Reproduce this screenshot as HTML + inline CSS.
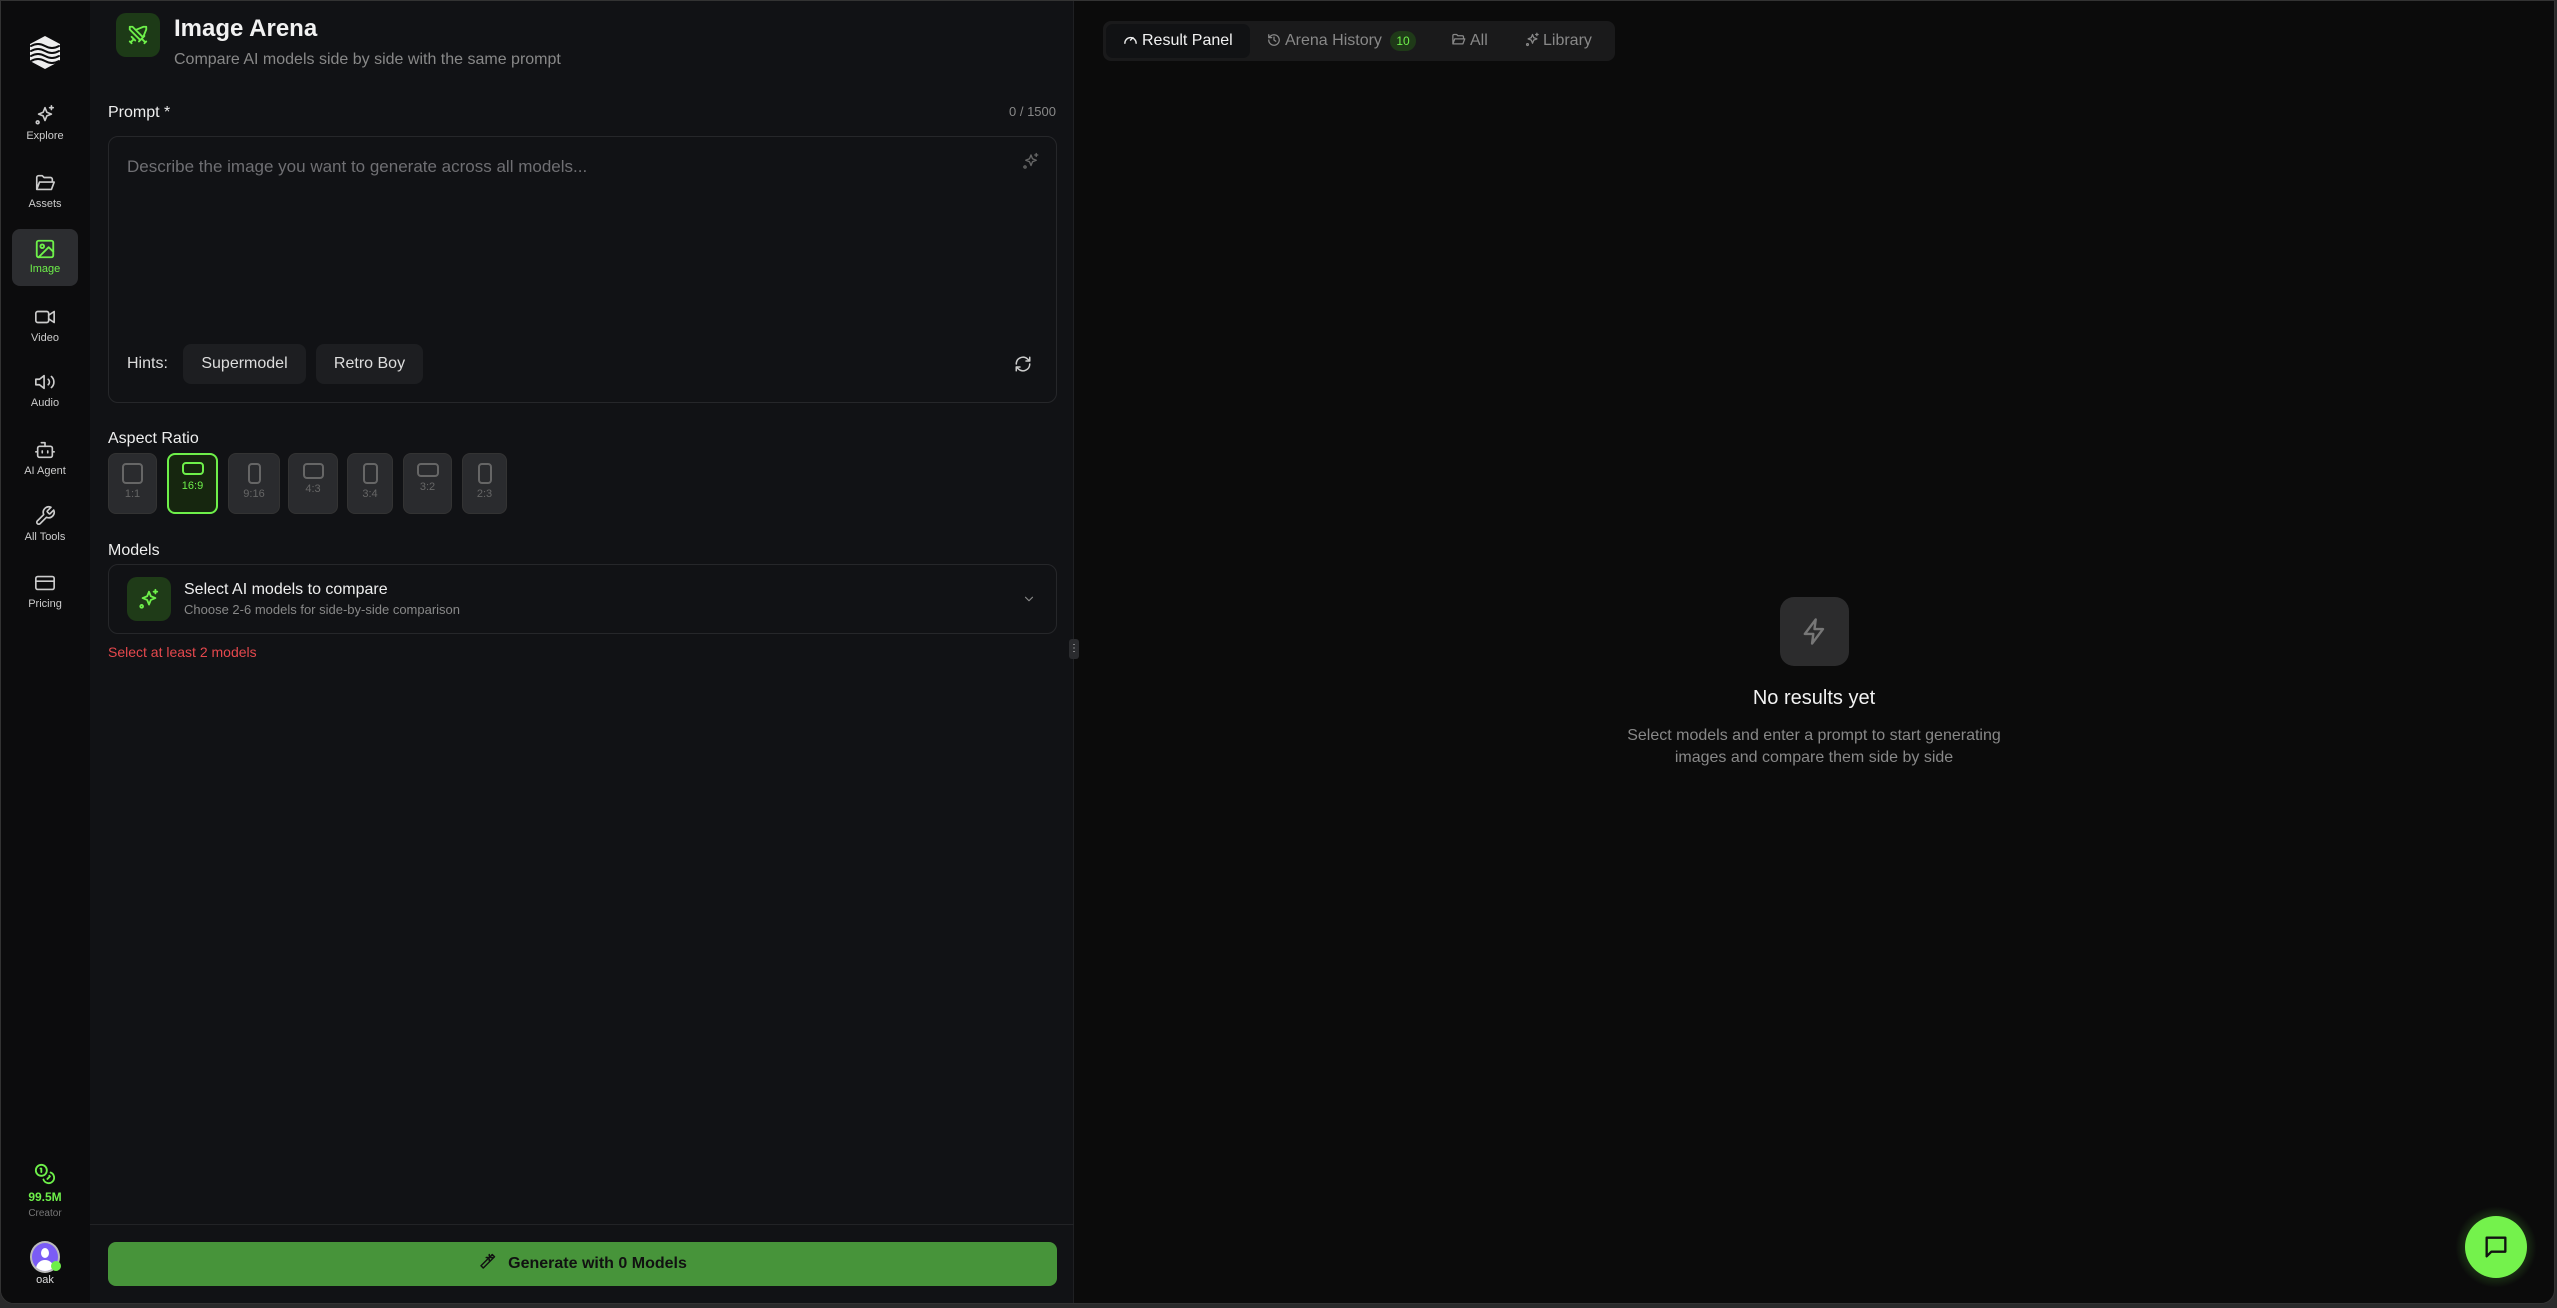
<!DOCTYPE html>
<html><head><meta charset="utf-8"><style>
*{box-sizing:border-box;margin:0;padding:0}
html,body{width:2557px;height:1308px;overflow:hidden;background:#2a2a2b;font-family:"Liberation Sans",sans-serif;color:#eee}
.frame{position:absolute;left:0;top:0;width:2555px;height:1304px;border:1px solid #333;border-radius:0 0 14px 14px;overflow:hidden;background:#0b0b0b}
.side{position:absolute;left:0;top:0;width:89px;height:100%;background:#0c0c0d}
.left{position:absolute;left:89px;top:0;width:984px;height:100%;background:#111215;border-right:1px solid #1f2023}
.a{position:absolute}
.nav{position:absolute;left:11px;width:66px;text-align:center;font-size:11px;color:#ccc}
.nav svg{display:block;margin:0 auto}
svg{fill:none;stroke-linecap:round;stroke-linejoin:round}
.ratio{position:absolute;top:452px;height:61px;border-radius:8px;background:#2a2b2e;border:1px solid #333;text-align:center;font-size:11px;color:#666}
.ratio i{display:block;margin:0 auto;border:2px solid #666;border-radius:4px}
.chip{position:absolute;top:343px;height:40px;border-radius:8px;background:#1d1e21;font-size:16px;color:#ddd;line-height:40px;text-align:center}
</style></head><body>
<div class="frame">
<div class="side">
  <svg class="a" style="left:27px;top:33px" width="34" height="37" viewBox="0 0 34 37" stroke="#eee" stroke-width="2.6"><path d="M17 2 L32 10 L32 27 L17 35 L2 27 L2 10 Z" fill="#eee" stroke="none"/><path d="M3 12 Q10 8 17 12 T31 12 M3 17 Q10 13 17 17 T31 17 M3 22 Q10 18 17 22 T31 22 M3 27 Q10 23 17 27 T31 27" stroke="#0c0c0d" stroke-width="2"/></svg>
  <div class="nav" style="top:103px"><svg width="22" height="22" viewBox="0 0 24 24" stroke="#ccc" stroke-width="1.8"><path d="M12 4l2 5 5 2-5 2-2 5-2-5-5-2 5-2z"/><path d="M19 2v4M17 4h4"/><circle cx="4" cy="20" r="1.5"/></svg><div style="margin-top:4px">Explore</div></div>
  <div class="nav" style="top:171px"><svg width="22" height="22" viewBox="0 0 24 24" stroke="#ccc" stroke-width="1.8"><path d="M3 19V6a2 2 0 0 1 2-2h4l2 2h7a2 2 0 0 1 2 2v2M3 19l3-8h16l-3 8z"/></svg><div style="margin-top:4px">Assets</div></div>
  <div class="nav" style="top:228px;height:57px;background:#2c2d30;border-radius:8px;color:#6ef04a;padding-top:9px"><svg width="22" height="22" viewBox="0 0 24 24" stroke="#6ef04a" stroke-width="2"><rect x="3" y="3" width="18" height="18" rx="2"/><circle cx="9" cy="9" r="2"/><path d="M21 15l-5-5L5 21"/></svg><div style="margin-top:3px">Image</div></div>
  <div class="nav" style="top:305px"><svg width="22" height="22" viewBox="0 0 24 24" stroke="#ccc" stroke-width="1.8"><rect x="2" y="6" width="14" height="12" rx="2"/><path d="M16 10l6-4v12l-6-4"/></svg><div style="margin-top:4px">Video</div></div>
  <div class="nav" style="top:370px"><svg width="22" height="22" viewBox="0 0 24 24" stroke="#ccc" stroke-width="1.8"><path d="M11 5L6 9H2v6h4l5 4z"/><path d="M15.5 9a4 4 0 0 1 0 6M19 6a8 8 0 0 1 0 12"/></svg><div style="margin-top:4px">Audio</div></div>
  <div class="nav" style="top:438px"><svg width="22" height="22" viewBox="0 0 24 24" stroke="#ccc" stroke-width="1.8"><rect x="4" y="8" width="16" height="12" rx="2"/><path d="M12 8V4H8M2 14h2M20 14h2M9 13v2M15 13v2"/></svg><div style="margin-top:4px">AI Agent</div></div>
  <div class="nav" style="top:504px"><svg width="22" height="22" viewBox="0 0 24 24" stroke="#ccc" stroke-width="1.8"><path d="M14.7 6.3a1 1 0 0 0 0 1.4l1.6 1.6a1 1 0 0 0 1.4 0l3.8-3.8a6 6 0 0 1-7.9 7.9l-6.9 6.9a2.1 2.1 0 0 1-3-3l6.9-6.9a6 6 0 0 1 7.9-7.9z"/></svg><div style="margin-top:4px">All Tools</div></div>
  <div class="nav" style="top:571px"><svg width="22" height="22" viewBox="0 0 24 24" stroke="#ccc" stroke-width="1.8"><rect x="2" y="5" width="20" height="14" rx="2"/><path d="M2 10h20"/></svg><div style="margin-top:4px">Pricing</div></div>
  <svg class="a" style="left:33px;top:1162px" width="22" height="22" viewBox="0 0 24 24" stroke="#6ef04a" stroke-width="2"><circle cx="8" cy="8" r="6"/><path d="M18.1 10.4A6 6 0 1 1 10.3 18"/><path d="M7 6h1v4M16.7 13.9l.7.7-2.8 2.8"/></svg>
  <div class="a" style="left:0;width:88px;top:1189px;text-align:center;font-size:12px;color:#6ef04a;font-weight:bold">99.5M</div>
  <div class="a" style="left:0;width:88px;top:1207px;text-align:center;font-size:10px;color:#777">Creator</div>
  <div class="a" style="left:29px;top:1240px;width:30px;height:32px;border-radius:50%;background:#7b5cf5;border:2px solid #bbb;overflow:hidden"><div style="position:absolute;left:9px;top:5px;width:8px;height:10px;border-radius:50%;background:#fff"></div><div style="position:absolute;left:4px;top:17px;width:18px;height:12px;border-radius:9px 9px 0 0;background:#fff"></div></div>
  <div class="a" style="left:50px;top:1260px;width:10px;height:10px;border-radius:50%;background:#6ef04a"></div>
  <div class="a" style="left:0;width:88px;top:1273px;text-align:center;font-size:11px;color:#ddd">oak</div>
</div>

<div class="left">
  <div class="a" style="left:26px;top:12px;width:44px;height:44px;border-radius:10px;background:#1d3a17"><svg style="margin:11px" width="22" height="22" viewBox="0 0 24 24" stroke="#6ef04a" stroke-width="2"><path d="M14.5 17.5L3 6V3h3l11.5 11.5M13 19l6-6M16 16l4 4M19 21l2-2M9.5 6.5L18 3h3v3l-3.5 8.5M5 14l4 4M7 17l-3 3M3 19l2 2"/></svg></div>
  <div class="a" style="left:84px;top:14px;font-size:24px;font-weight:bold;color:#f2f2f2">Image Arena</div>
  <div class="a" style="left:84px;top:50px;font-size:16px;color:#888">Compare AI models side by side with the same prompt</div>
  <div class="a" style="left:18px;top:103px;font-size:16px;color:#eee">Prompt *</div>
  <div class="a" style="left:876px;top:103px;width:90px;text-align:right;font-size:13px;color:#888">0 / 1500</div>
  <div class="a" style="left:18px;top:135px;width:949px;height:267px;border:1px solid #26272a;border-radius:10px">
    <div class="a" style="left:18px;top:20px;font-size:17px;color:#6f6f73">Describe the image you want to generate across all models...</div>
    <svg class="a" style="left:913px;top:15px" width="18" height="18" viewBox="0 0 24 24" stroke="#666" stroke-width="1.8"><path d="M12 4l2 5 5 2-5 2-2 5-2-5-5-2 5-2z"/><path d="M19 2v4M17 4h4"/><circle cx="4" cy="20" r="1.5"/></svg>
    <div class="a" style="left:18px;top:218px;font-size:16px;color:#ddd">Hints:</div>
    <svg class="a" style="left:905px;top:218px" width="18" height="18" viewBox="0 0 24 24" stroke="#ccc" stroke-width="2"><path d="M3 12a9 9 0 0 1 15-6.7L21 8M21 3v5h-5M21 12a9 9 0 0 1-15 6.7L3 16M8 16H3v5"/></svg>
  </div>
  <div class="chip" style="left:93px;width:123px">Supermodel</div>
  <div class="chip" style="left:226px;width:107px">Retro Boy</div>

  <div class="a" style="left:18px;top:429px;font-size:16px;color:#eee">Aspect Ratio</div>
  <div class="ratio" style="left:18px;width:49px;padding-top:9px"><i style="width:21px;height:21px"></i><div style="margin-top:4px">1:1</div></div>
  <div class="ratio" style="left:77px;width:51px;padding-top:7px;background:#16260f;border:2px solid #6ef04a;color:#6ef04a"><i style="width:22px;height:13px;border-color:#6ef04a"></i><div style="margin-top:5px">16:9</div></div>
  <div class="ratio" style="left:138px;width:52px;padding-top:9px"><i style="width:13px;height:21px"></i><div style="margin-top:4px">9:16</div></div>
  <div class="ratio" style="left:198px;width:50px;padding-top:9px"><i style="width:21px;height:16px"></i><div style="margin-top:4px">4:3</div></div>
  <div class="ratio" style="left:257px;width:46px;padding-top:9px"><i style="width:15px;height:21px"></i><div style="margin-top:4px">3:4</div></div>
  <div class="ratio" style="left:313px;width:49px;padding-top:9px"><i style="width:22px;height:14px"></i><div style="margin-top:4px">3:2</div></div>
  <div class="ratio" style="left:372px;width:45px;padding-top:9px"><i style="width:14px;height:21px"></i><div style="margin-top:4px">2:3</div></div>

  <div class="a" style="left:18px;top:541px;font-size:16px;color:#eee">Models</div>
  <div class="a" style="left:18px;top:563px;width:949px;height:70px;border:1px solid #26272a;border-radius:10px">
    <div class="a" style="left:18px;top:12px;width:44px;height:44px;border-radius:10px;background:#1f3b18"><svg style="margin:11px" width="22" height="22" viewBox="0 0 24 24" stroke="#6ef04a" stroke-width="2"><path d="M12 4l2 5 5 2-5 2-2 5-2-5-5-2 5-2z"/><path d="M19 2v4M17 4h4"/><circle cx="4" cy="20" r="1.5"/></svg></div>
    <div class="a" style="left:75px;top:16px;font-size:16px;color:#eee">Select AI models to compare</div>
    <div class="a" style="left:75px;top:37px;font-size:13px;color:#888">Choose 2-6 models for side-by-side comparison</div>
    <svg class="a" style="left:913px;top:27px" width="14" height="14" viewBox="0 0 24 24" stroke="#888" stroke-width="2"><path d="M6 9l6 6 6-6"/></svg>
  </div>
  <div class="a" style="left:18px;top:643px;font-size:14px;color:#e5484d">Select at least 2 models</div>

  <div class="a" style="left:0;top:1223px;width:984px;height:1px;background:#222326"></div>
  <div class="a" style="left:18px;top:1241px;width:949px;height:44px;border-radius:8px;background:#47943a;text-align:center;line-height:44px;font-size:16px;font-weight:bold;color:#111">
    <svg style="vertical-align:-3px;margin-right:12px" width="18" height="18" viewBox="0 0 24 24" stroke="#111" stroke-width="2"><path d="M15 4V2M15 10V8M11 6h2M17 6h2M19 2l-15 15 3 3L22 5z"/></svg>Generate with 0 Models</div>
</div>
<div class="a" style="left:1068px;top:638px;width:10px;height:20px;border-radius:3px;background:#2a2b2e;color:#ccc;font-size:10px;text-align:center;line-height:20px">⋮</div>

<div class="a" style="left:1102px;top:20px;width:512px;height:40px;border-radius:8px;background:#1a1a1b"></div>
<div class="a" style="left:1105px;top:23px;width:144px;height:34px;border-radius:7px;background:#111214"></div>
<div class="a" style="left:1122px;top:31px;font-size:16px;color:#f2f2f2"><svg style="vertical-align:-2px;margin-right:4px" width="15" height="15" viewBox="0 0 24 24" stroke="#eee" stroke-width="2.2"><path d="M3 18a9 9 0 1 1 18 0M12 13l4-4"/></svg>Result Panel</div>
<div class="a" style="left:1266px;top:31px;font-size:16px;color:#888"><svg style="vertical-align:-2px;margin-right:4px" width="14" height="14" viewBox="0 0 24 24" stroke="#888" stroke-width="2.2"><path d="M3 12a9 9 0 1 0 3-6.7L3 8M3 3v5h5M12 7v5l3 2"/></svg>Arena History</div>
<div class="a" style="left:1389px;top:30px;width:26px;height:20px;border-radius:10px;background:#1f3a18;color:#6ef04a;font-size:12px;text-align:center;line-height:20px">10</div>
<div class="a" style="left:1450px;top:31px;font-size:16px;color:#888"><svg style="vertical-align:-2px;margin-right:4px" width="15" height="15" viewBox="0 0 24 24" stroke="#888" stroke-width="2"><path d="M3 19V6a2 2 0 0 1 2-2h4l2 2h7a2 2 0 0 1 2 2v2M3 19l3-8h16l-3 8z"/></svg>All</div>
<div class="a" style="left:1524px;top:31px;font-size:16px;color:#888"><svg style="vertical-align:-2px;margin-right:3px" width="15" height="15" viewBox="0 0 24 24" stroke="#888" stroke-width="2"><path d="M12 4l2 5 5 2-5 2-2 5-2-5-5-2 5-2z"/><path d="M19 2v4M17 4h4"/><circle cx="4" cy="20" r="1.5"/></svg>Library</div>

<div class="a" style="left:1779px;top:596px;width:69px;height:69px;border-radius:14px;background:#2c2c2d"><svg style="margin:20px" width="29" height="29" viewBox="0 0 24 24" stroke="#777" stroke-width="2"><path d="M13 2L4 14h7l-1 8 9-12h-7z"/></svg></div>
<div class="a" style="left:1613px;width:400px;top:686px;text-align:center;font-size:20px;color:#f2f2f2">No results yet</div>
<div class="a" style="left:1563px;width:500px;top:724px;text-align:center;font-size:16px;line-height:22px;color:#888">Select models and enter a prompt to start generating<br>images and compare them side by side</div>

<div class="a" style="left:2454px;top:1205px;width:82px;height:82px;border-radius:50%;background:radial-gradient(circle,rgba(110,240,74,.25) 40%,rgba(110,240,74,0) 70%)"></div>
<div class="a" style="left:2464px;top:1215px;width:62px;height:62px;border-radius:50%;background:#74f24c"><svg style="margin:17px" width="28" height="28" viewBox="0 0 24 24" stroke="#111" stroke-width="2"><path d="M4 4h16v12H8l-4 4z"/></svg></div>
</div>
</body></html>
